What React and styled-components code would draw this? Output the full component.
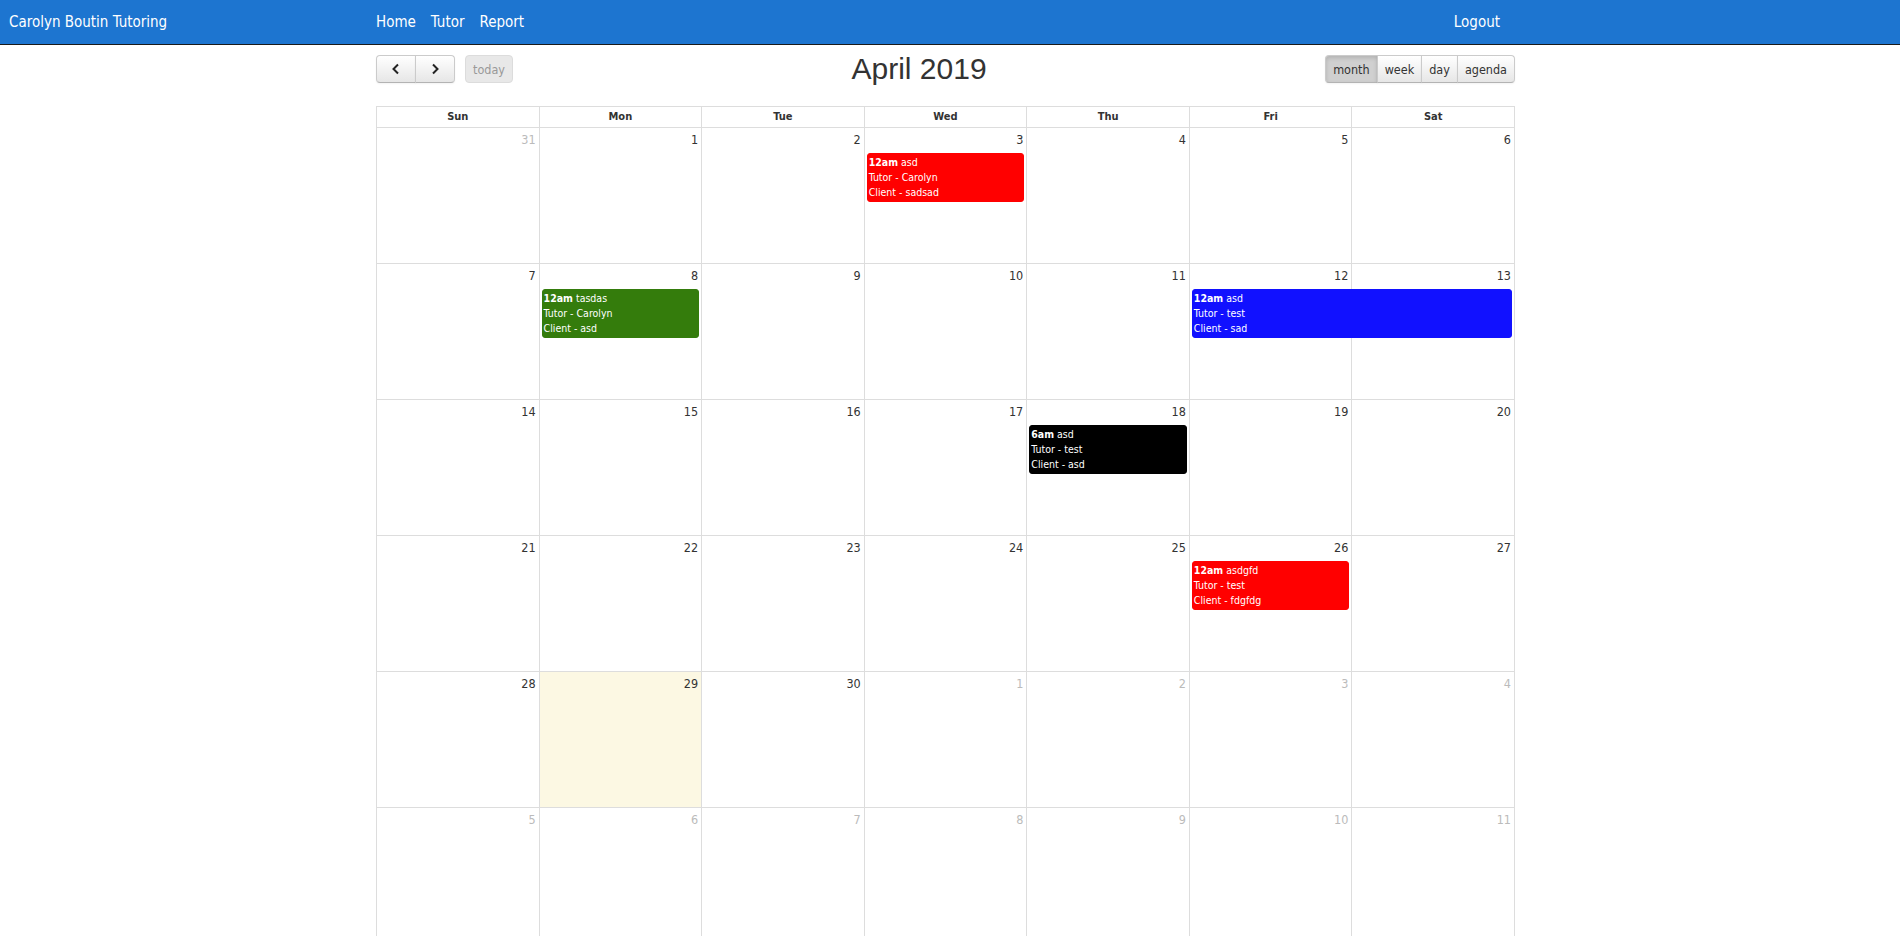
import React from "react";
import styled, { createGlobalStyle, css } from "styled-components";

const NARROW = `"DejaVu Sans Condensed", "Liberation Sans", sans-serif`;

const GlobalStyle = createGlobalStyle`
  body {
    margin: 0;
    background: #fff;
    font-family: ${NARROW};
    color: #333;
  }
`;

const Navbar = styled.div`
  height: 44px;
  background: #1d75d0;
  border-bottom: 1px solid #1a1a1a;
  color: #fff;
`;

const NavInner = styled.div`
  width: 1515px;
  height: 100%;
  display: flex;
  align-items: center;
  font-size: 15px;
`;

const Brand = styled.div`
  width: 367px;
  padding-left: 9px;
`;

const NavLinks = styled.div`
  display: flex;
  gap: 15px;
`;

const NavLink = styled.span`
  cursor: pointer;
`;

const Logout = styled.span`
  margin-left: auto;
  padding-right: 15px;
  cursor: pointer;
`;

const Main = styled.div`
  padding-left: 376px;
  width: 1139px;
`;

const Toolbar = styled.div`
  display: flex;
  align-items: center;
  margin-top: 10px;
  margin-bottom: 23px;
  height: 28px;
`;

const Left = styled.div`
  display: flex;
  gap: 10px;
`;

const Group = styled.div`
  display: flex;
`;

const Button = styled.button`
  height: 28px;
  padding: 0 ${(p) => p.$pad || 7}px;
  font-family: ${NARROW};
  font-size: 12.5px;
  color: #333;
  border: 1px solid #cbcbcb;
  border-bottom-color: #b3b3b3;
  background: linear-gradient(#fff, #e6e6e6);
  box-shadow: inset 0 1px 0 rgba(255, 255, 255, 0.2), 0 1px 2px rgba(0, 0, 0, 0.05);
  display: flex;
  align-items: center;
  justify-content: center;
  cursor: pointer;
  margin-left: -1px;
  &:first-child {
    margin-left: 0;
    border-radius: 4px 0 0 4px;
  }
  &:last-child {
    border-radius: 0 4px 4px 0;
  }
  ${(p) =>
    p.$active &&
    css`
      background: #d0d0d0;
      box-shadow: inset 0 2px 4px rgba(0, 0, 0, 0.15), 0 1px 2px rgba(0, 0, 0, 0.05);
    `}
  ${(p) =>
    p.$disabled &&
    css`
      background: #e8e8e8;
      color: #999;
      border-color: #dcdcdc;
      box-shadow: none;
      border-radius: 4px !important;
      cursor: default;
    `}
`;

const Title = styled.h2`
  flex: 1;
  margin: 0;
  text-align: center;
  font-family: "Liberation Sans", Arial, sans-serif;
  font-weight: 400;
  font-size: 30px;
  color: #333;
`;

const Calendar = styled.div`
  border: 1px solid #ddd;
  border-bottom: none;
`;

const HeadRow = styled.div`
  display: grid;
  grid-template-columns: repeat(7, 1fr);
  column-gap: 1px;
  background: #ddd;
  border-bottom: 1px solid #ddd;
`;

const HeadCell = styled.div`
  background: #fff;
  height: 20px;
  line-height: 20px;
  text-align: center;
  font-weight: 700;
  font-size: 11px;
`;

const Week = styled.div`
  display: grid;
  grid-template-columns: repeat(7, 1fr);
  grid-template-rows: 25px auto 1fr;
  column-gap: 1px;
  background: #ddd;
  height: 135px;
  border-bottom: 1px solid #ddd;
`;

const Day = styled.div`
  grid-row: 1 / -1;
  background: ${(p) => (p.$today ? "#fcf8e3" : "#fff")};
`;

const DayNum = styled.div`
  grid-row: 1;
  text-align: right;
  padding: 4px 3px 0 0;
  font-size: 12.5px;
  line-height: 16px;
  color: ${(p) => (p.$other ? "#bbb" : "#333")};
`;

const Event = styled.div`
  grid-row: 2;
  margin: 0 2px;
  padding: 1px;
  background: ${(p) => p.$color};
  border: 1px solid ${(p) => p.$color};
  border-radius: 3px;
  color: #fff;
  font-size: 10.5px;
  line-height: 15px;
  white-space: nowrap;
  overflow: hidden;
  b {
    font-weight: 700;
  }
`;

const Chevron = ({ dir }) => (
  <svg width="10" height="12" viewBox="0 0 10 12">
    <polyline
      points={dir === "left" ? "7,1.5 2.5,6 7,10.5" : "3,1.5 7.5,6 3,10.5"}
      fill="none"
      stroke="#222"
      strokeWidth="2"
    />
  </svg>
);

const dayNames = ["Sun", "Mon", "Tue", "Wed", "Thu", "Fri", "Sat"];

const weeks = [
  [31, 1, 2, 3, 4, 5, 6],
  [7, 8, 9, 10, 11, 12, 13],
  [14, 15, 16, 17, 18, 19, 20],
  [21, 22, 23, 24, 25, 26, 27],
  [28, 29, 30, 1, 2, 3, 4],
  [5, 6, 7, 8, 9, 10, 11],
];

const isOther = (w, d) => (w === 0 && d === 0) || (w === 4 && d > 2) || w === 5;

const events = [
  { week: 0, start: 3, span: 1, color: "#ff0000", time: "12am", title: "asd", tutor: "Carolyn", client: "sadsad" },
  { week: 1, start: 1, span: 1, color: "#347c0c", time: "12am", title: "tasdas", tutor: "Carolyn", client: "asd" },
  { week: 1, start: 5, span: 2, color: "#1111ff", time: "12am", title: "asd", tutor: "test", client: "sad" },
  { week: 2, start: 4, span: 1, color: "#000000", time: "6am", title: "asd", tutor: "test", client: "asd" },
  { week: 3, start: 5, span: 1, color: "#ff0000", time: "12am", title: "asdgfd", tutor: "test", client: "fdgfdg" },
];

export default function App() {
  return (
    <>
      <GlobalStyle />
      <Navbar>
        <NavInner>
          <Brand>Carolyn Boutin Tutoring</Brand>
          <NavLinks>
            <NavLink>Home</NavLink>
            <NavLink>Tutor</NavLink>
            <NavLink>Report</NavLink>
          </NavLinks>
          <Logout>Logout</Logout>
        </NavInner>
      </Navbar>
      <Main>
        <Toolbar>
          <Left>
            <Group>
              <Button $pad={14}><Chevron dir="left" /></Button>
              <Button $pad={14}><Chevron dir="right" /></Button>
            </Group>
            <Group>
              <Button $disabled>today</Button>
            </Group>
          </Left>
          <Title>April 2019</Title>
          <Group>
            <Button $active>month</Button>
            <Button>week</Button>
            <Button>day</Button>
            <Button>agenda</Button>
          </Group>
        </Toolbar>
        <Calendar>
          <HeadRow>
            {dayNames.map((d) => (
              <HeadCell key={d}>{d}</HeadCell>
            ))}
          </HeadRow>
          {weeks.map((days, w) => (
            <Week key={w}>
              {days.map((n, i) => (
                <Day key={"d" + i} $today={w === 4 && i === 1} style={{ gridColumn: i + 1 }} />
              ))}
              {days.map((n, i) => (
                <DayNum key={"n" + i} $other={isOther(w, i)} style={{ gridColumn: i + 1 }}>
                  {n}
                </DayNum>
              ))}
              {events
                .filter((e) => e.week === w)
                .map((e, k) => (
                  <Event
                    key={"e" + k}
                    $color={e.color}
                    style={{ gridColumn: `${e.start + 1} / span ${e.span}` }}
                  >
                    <div>
                      <b>{e.time}</b> {e.title}
                    </div>
                    <div>Tutor - {e.tutor}</div>
                    <div>Client - {e.client}</div>
                  </Event>
                ))}
            </Week>
          ))}
        </Calendar>
      </Main>
    </>
  );
}
